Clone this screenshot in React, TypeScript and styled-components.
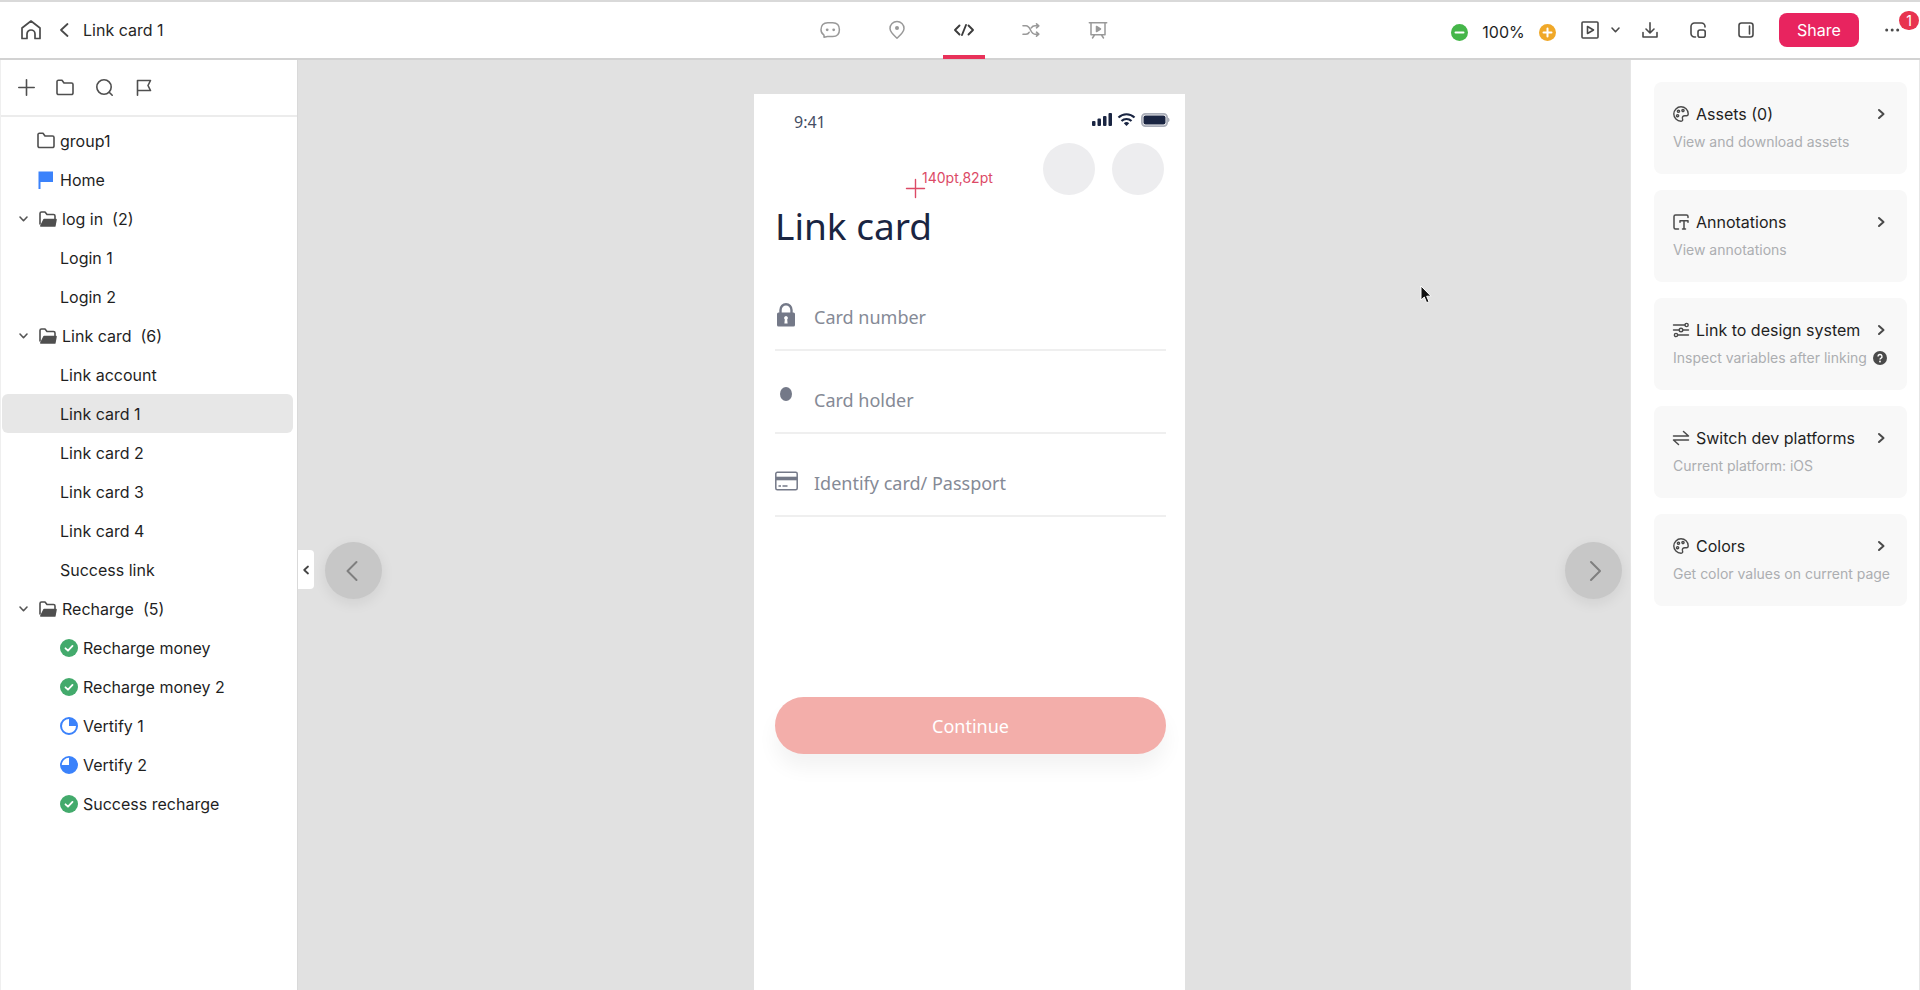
import React from "react";
import styled, { createGlobalStyle } from "styled-components";

const GlobalStyle = createGlobalStyle`
  *, *::before, *::after { box-sizing: border-box; }
  body {
    margin: 0;
    font-family: Inter, "Liberation Sans", sans-serif;
    font-size: 16px;
    line-height: 24px;
    color: #1f1f1f;
    background: #fff;
  }
  button { font: inherit; color: inherit; background: none; border: 0; padding: 0; cursor: pointer; }
  ul { list-style: none; margin: 0; padding: 0; }
  h1, h2, p { margin: 0; font-weight: 400; }
  svg { display: block; flex: none; overflow: visible; }
`;

const Page = styled.div`
  display: flex;
  flex-direction: column;
  height: 100vh;
  border-top: 2px solid #d9d9d9;
  overflow: hidden;
`;

/* ---------- header ---------- */

const Header = styled.header`
  flex: none;
  display: grid;
  grid-template-columns: 1fr auto 1fr;
  align-items: center;
  height: 58px;
  padding: 0 12px 0 20px;
  border-bottom: 2px solid #d2d2d2;
  background: #fff;
`;

const Breadcrumb = styled.div`
  display: flex;
  align-items: center;
  color: #4a4a4a;
`;

const HomeLink = styled.a`
  display: flex;
  color: inherit;
`;

const BackButton = styled.button`
  display: flex;
  margin: 0 13px 0 18px;
`;

const PageName = styled.h1`
  font-size: 16px;
  color: #262626;
`;

const ModeTabs = styled.nav`
  display: flex;
  align-self: stretch;
  gap: 25px;
`;

const ModeTab = styled.button<{ $active?: boolean }>`
  position: relative;
  display: flex;
  align-items: center;
  justify-content: center;
  width: 42px;
  color: ${(p) => (p.$active ? "#3c3c3c" : "#999")};

  &::after {
    content: "";
    position: absolute;
    left: 0;
    right: 0;
    bottom: -1px;
    height: 4px;
    background: ${(p) => (p.$active ? "#e8325a" : "transparent")};
  }
`;

const Actions = styled.div`
  display: flex;
  align-items: center;
  justify-content: flex-end;
  color: #4a4a4a;
`;

const Zoom = styled.div`
  display: flex;
  align-items: center;
  gap: 14px;
  margin: 4px 25px 0 0;
`;

const ZoomButton = styled.button<{ $color: string }>`
  display: flex;
  align-items: center;
  justify-content: center;
  width: 17px;
  height: 17px;
  border-radius: 50%;
  color: #fff;
  background: ${(p) => p.$color};
`;

const ZoomValue = styled.span`
  width: 43px;
  text-align: center;
  color: #1f1f1f;
`;

const IconButton = styled.button<{ $gap?: number }>`
  display: flex;
  align-items: center;
  margin-right: ${(p) => p.$gap ?? 0}px;
`;

const ShareButton = styled.button`
  width: 80px;
  height: 34px;
  margin-right: 26px;
  border-radius: 8px;
  color: #fff;
  background: #e8245f;
`;

const MoreButton = styled.button`
  position: relative;
  display: flex;
  align-items: center;
  width: 23px;
  height: 24px;
`;

const Badge = styled.span`
  position: absolute;
  top: -7px;
  right: -11px;
  width: 20px;
  height: 19px;
  border-radius: 10px;
  font-size: 14px;
  line-height: 19px;
  text-align: center;
  color: #fff;
  background: #e8334f;
`;

/* ---------- sidebar ---------- */

const Body = styled.div`
  display: flex;
  flex: 1;
  min-height: 0;
`;

const Sidebar = styled.aside`
  flex: none;
  width: 298px;
  border-left: 1px solid #efefef;
  border-right: 1px solid #d9d9d9;
  background: #fff;
  overflow: hidden;
`;

const SidebarTools = styled.div`
  display: flex;
  align-items: center;
  gap: 15px;
  height: 57px;
  padding: 0 13px;
  border-bottom: 2px solid #ececec;
  color: #4f4f4f;
`;

const ToolButton = styled.button`
  display: flex;
  align-items: center;
  justify-content: center;
  width: 24px;
  height: 24px;
`;

const Tree = styled.ul`
  padding: 4px 4px 0 1px;
`;

const Row = styled.button<{ $indent: number; $selected?: boolean }>`
  display: flex;
  align-items: center;
  gap: 5px;
  width: 100%;
  height: 39px;
  padding-left: ${(p) => p.$indent}px;
  border-radius: 6px;
  text-align: left;
  background: ${(p) => (p.$selected ? "#e7e7e7" : "transparent")};
`;

const RowIcon = styled.span`
  display: flex;
  justify-content: center;
  width: 18px;
  color: #4f4f4f;
`;

const Chevron = styled.span`
  display: flex;
  width: 15px;
  color: #555;
`;

const Count = styled.span`
  margin-left: 4px;
`;

/* ---------- canvas ---------- */

const Canvas = styled.main`
  position: relative;
  flex: 1;
  display: flex;
  align-items: stretch;
  min-width: 0;
  padding-left: 11px;
  background: #e1e1e1;
`;

const CollapseButton = styled.button`
  position: absolute;
  left: 0;
  top: calc(50% + 25px);
  display: flex;
  align-items: center;
  justify-content: center;
  width: 16px;
  height: 39px;
  border-radius: 0 4px 4px 0;
  color: #444;
  background: #fff;
`;

const Flank = styled.div<{ $end?: boolean }>`
  flex: 1;
  display: flex;
  align-items: center;
  justify-content: ${(p) => (p.$end ? "flex-end" : "flex-start")};
  padding: 90px 8px 0 16px;
`;

const NavButton = styled.button`
  display: flex;
  align-items: center;
  justify-content: center;
  width: 57px;
  height: 57px;
  border-radius: 50%;
  color: #7f7f7f;
  background: #c7c7c7;
  box-shadow: 0 4px 14px rgba(0, 0, 0, 0.08);
`;

const Cursor = styled.div`
  position: absolute;
  right: 198px;
  top: 225px;
`;

const Phone = styled.section`
  position: relative;
  flex: none;
  width: 431px;
  margin-top: 34px;
  padding: 0 19px 0 21px;
  font-family: "Noto Sans", "Open Sans", sans-serif;
  color: #1a2542;
  background: #fff;
`;

const StatusBar = styled.div`
  display: flex;
  align-items: center;
  justify-content: space-between;
  height: 49px;
  padding: 6px 0 0 19px;
  margin-right: -4px;
  font-size: 16px;
  color: #454d64;
`;

const StatusIcons = styled.div`
  display: flex;
  align-items: center;
  gap: 6px;
  margin-bottom: 4px;
  color: #1a2542;
`;

const AvatarRow = styled.div`
  display: flex;
  justify-content: flex-end;
  gap: 17px;
  padding-right: 2px;
`;

const Avatar = styled.span`
  width: 52px;
  height: 52px;
  border-radius: 50%;
  background: #ededef;
`;

const ScreenTitle = styled.h2`
  margin-top: 5px;
  font-size: 37px;
  line-height: 52px;
`;

const Fields = styled.div`
  margin-top: 16px;
`;

const Field = styled.label`
  display: flex;
  align-items: flex-end;
  height: 83px;
  padding-bottom: 19px;
  border-bottom: 2px solid #efefef;
  color: #747988;
`;

const FieldIcon = styled.span`
  display: flex;
  align-items: center;
  justify-content: center;
  width: 22px;
  height: 31px;
  margin-right: 17px;
`;

const FieldInput = styled.input`
  flex: 1;
  min-width: 0;
  height: 26px;
  padding: 0;
  border: 0;
  outline: 0;
  font: 18px/26px "Noto Sans", "Open Sans", sans-serif;
  color: #747988;
  background: transparent;

  &::placeholder { color: #858a96; opacity: 1; }
`;

const ContinueButton = styled.button`
  display: block;
  width: 100%;
  height: 57px;
  margin-top: 180px;
  border-radius: 29px;
  font-size: 18px;
  color: #fff;
  background: #f3aeaa;
  box-shadow: 0 14px 20px rgba(0, 0, 0, 0.05);
`;

const Measure = styled.div`
  position: absolute;
  left: 152px;
  top: 74px;
  display: flex;
  align-items: flex-end;
  color: #dc4a66;
`;

const Coordinates = styled.span`
  margin: 0 0 10px -3px;
  font: 14px/20px Inter, sans-serif;
`;

/* ---------- inspector ---------- */

const Inspector = styled.aside`
  flex: none;
  width: 290px;
  padding: 22px 12px 0 23px;
  border-left: 1px solid #e6e6e6;
  border-right: 1px solid #e6e6e6;
  background: #fff;
`;

const CardList = styled.ul`
  display: flex;
  flex-direction: column;
  gap: 16px;
`;

const Card = styled.button`
  display: block;
  width: 100%;
  height: 92px;
  padding: 4px 22px 6px 19px;
  border-radius: 8px;
  text-align: left;
  background: #f8f8f8;
`;

const CardHead = styled.span`
  display: flex;
  align-items: center;
  gap: 7px;
  color: #4a4a4a;
`;

const CardTitle = styled.span`
  flex: 1;
  color: #1f1f1f;
  white-space: nowrap;
`;

const CardHint = styled.span`
  display: flex;
  align-items: center;
  gap: 6px;
  margin-top: 6px;
  font-size: 14px;
  line-height: 20px;
  color: #acaeb1;
  white-space: nowrap;
`;

/* ---------- icons ---------- */

type IconProps = { w?: number; h?: number; vb?: string; sw?: number; children: React.ReactNode };

const Icon = ({ w = 18, h = 18, vb, sw = 1.6, children }: IconProps) => (
  <svg
    width={w}
    height={h}
    viewBox={vb ?? `0 0 ${w} ${h}`}
    fill="none"
    stroke="currentColor"
    strokeWidth={sw}
    strokeLinejoin="round"
    strokeLinecap="round"
    aria-hidden="true"
  >
    {children}
  </svg>
);

const HomeIcon = () => (
  <Icon w={21} h={20} sw={1.7}>
    <path d="M2 8 11 1l9 7v10.500h-5V14a4 4 0 0 0-8 0v4.500H2Z" />
  </Icon>
);
const FolderIcon = () => (
  <Icon h={17}>
    <path d="M1 3a1.500 1.500 0 0 1 1.500-1.800H6L8 4h7.500A1.500 1.500 0 0 1 17 5.500v8.500a1.500 1.500 0 0 1-1.500 1.500h-13A1.500 1.500 0 0 1 1 14Z" />
  </Icon>
);
const OpenFolderIcon = () => (
  <Icon h={16}>
    <path d="M1 13V2.500A1.500 1.500 0 0 1 2.500 1H6l2 2.500h6.500A1.500 1.500 0 0 1 16 5v4" />
    <path d="M5 8.500h12l-1.200 6.500H1.800Z" fill="currentColor" />
  </Icon>
);
const HomeFlagIcon = () => (
  <Icon sw={0}>
    <path d="M1.500.5h14.500v10.500H3.500V18H1.500Z" fill="#3b82fb" />
  </Icon>
);
const ChevronDown = () => (
  <Icon w={9} h={6}>
    <path d="m1 1 3.500 3.700L8 1" />
  </Icon>
);
const DoneIcon = () => (
  <Icon sw={1.8}>
    <circle cx="9" cy="9" r="9" fill="#43aa6c" stroke="none" />
    <path d="m5.500 9.300 2.500 2.400 4.500-4.800" stroke="#fff" />
  </Icon>
);
const ProgressIcon = ({ most }: { most?: boolean }) => (
  <Icon sw={2}>
    <circle cx="9" cy="9" r="8" stroke="#3b82fb" fill={most ? "#3b82fb" : "#fff"} />
    {most ? (
      <path d="M9 9V1.800A7.200 7.200 0 0 0 1.800 9Z" fill="#fff" stroke="none" />
    ) : (
      <path d="M9 9V1.200A7.800 7.800 0 0 1 16.800 9Z" fill="#3b82fb" stroke="none" />
    )}
  </Icon>
);
const PaletteIcon = () => (
  <Icon w={16} h={16} sw={1.4}>
    <path d="M8 .8a7.200 7.200 0 0 0 0 14.400c1.700 0 1.900-1.200 1.500-2.400-.5-1.900.5-3.100 2.300-3.100h1.700c1.200 0 1.700-.7 1.700-1.900C15.200 3.800 11.900.8 8 .8Z" />
    <circle cx="5.500" cy="5.300" r="1.100" />
    <circle cx="10" cy="4.600" r="1.100" />
    <circle cx="4.600" cy="9.700" r="1.100" />
  </Icon>
);
const AnnotationIcon = () => (
  <Icon w={16} h={16} sw={1.5}>
    <path d="M15 3.500V2.500A1.500 1.500 0 0 0 13.500 1h-11A1.500 1.500 0 0 0 1 2.500v11A1.500 1.500 0 0 0 2.500 15H5.500" />
    <path d="M7 8.300V6.800h8v1.500M11 6.800V15M9.500 15h3" />
  </Icon>
);
const SlidersIcon = () => (
  <Icon w={16} h={16} sw={1.4}>
    <path d="M.5 3H12M.5 8H6M10 8h5.500M5 13h10.500" />
    <circle cx="13.600" cy="3" r="1.600" />
    <circle cx="8" cy="8" r="1.800" />
    <circle cx="3" cy="13" r="1.600" />
  </Icon>
);
const SwitchIcon = () => (
  <Icon w={16} h={16} sw={1.5}>
    <path d="M.5 6h15L10.500 1.500M15.500 10H.5l5 4.500" />
  </Icon>
);

/* ---------- data ---------- */

type Node = { label: string; kind: "group" | "home" | "folder" | "page" | "done" | "quarter" | "most"; count?: number; selected?: boolean };

const nodes: Node[] = [
  { label: "group1", kind: "group" },
  { label: "Home", kind: "home" },
  { label: "log in", kind: "folder", count: 2 },
  { label: "Login 1", kind: "page" },
  { label: "Login 2", kind: "page" },
  { label: "Link card", kind: "folder", count: 6 },
  { label: "Link account", kind: "page" },
  { label: "Link card 1", kind: "page", selected: true },
  { label: "Link card 2", kind: "page" },
  { label: "Link card 3", kind: "page" },
  { label: "Link card 4", kind: "page" },
  { label: "Success link", kind: "page" },
  { label: "Recharge", kind: "folder", count: 5 },
  { label: "Recharge money", kind: "done" },
  { label: "Recharge money 2", kind: "done" },
  { label: "Vertify 1", kind: "quarter" },
  { label: "Vertify 2", kind: "most" },
  { label: "Success recharge", kind: "done" },
];

const indents = { group: 35, home: 35, folder: 17, page: 58, done: 58, quarter: 58, most: 58 };

const nodeIcons = {
  group: <FolderIcon />,
  home: <HomeFlagIcon />,
  folder: <OpenFolderIcon />,
  page: null,
  done: <DoneIcon />,
  quarter: <ProgressIcon />,
  most: <ProgressIcon most />,
};

const cards = [
  { title: "Assets (0)", hint: "View and download assets", icon: <PaletteIcon /> },
  { title: "Annotations", hint: "View annotations", icon: <AnnotationIcon /> },
  { title: "Link to design system", hint: "Inspect variables after linking", icon: <SlidersIcon />, help: true },
  { title: "Switch dev platforms", hint: "Current platform: iOS", icon: <SwitchIcon /> },
  { title: "Colors", hint: "Get color values on current page", icon: <PaletteIcon /> },
];

const HelpMark = () => (
  <svg width="14" height="14" viewBox="0 0 14 14" aria-hidden="true">
    <circle cx="7" cy="7" r="7" fill="#4a4a4a" />
    <path d="M5 5.500a2 2 0 1 1 2.800 1.800c-.6.300-.8.500-.8 1.200" fill="none" stroke="#fff" strokeWidth="1.400" />
    <circle cx="7" cy="10.500" r=".9" fill="#fff" />
  </svg>
);

const fields = [
  {
    label: "Card number",
    icon: (
      <svg width="18" height="24" viewBox="0 0 18 24" aria-hidden="true">
        <path d="M3.500 10V7a5.500 5.800 0 0 1 11 0v3" fill="none" stroke="currentColor" strokeWidth="2.400" />
        <rect y="9.500" width="18" height="14" rx="1.500" fill="currentColor" />
        <path d="M9 13a2 2 0 0 1 1.200 3.500l.4 4H7.400l.4-4A2 2 0 0 1 9 13Z" fill="#fff" />
      </svg>
    ),
  },
  {
    label: "Card holder",
    icon: (
      <svg width="12" height="24" viewBox="0 0 12 24" aria-hidden="true">
        <ellipse cx="6" cy="8" rx="6" ry="7" fill="currentColor" />
      </svg>
    ),
  },
  {
    label: "Identify card/ Passport",
    icon: (
      <svg width="23" height="24" viewBox="0 0 23 24" fill="none" stroke="currentColor" aria-hidden="true">
        <rect x=".8" y="3.300" width="21.400" height="17.500" rx="1.500" strokeWidth="1.500" />
        <path d="M1 9.500h21" strokeWidth="3.600" />
        <path d="M3.500 17H6M7.500 17h5" strokeWidth="1.300" />
      </svg>
    ),
  },
];

/* ---------- page ---------- */

export default function App() {
  return (
    <Page>
      <GlobalStyle />
      <Header>
        <Breadcrumb>
          <HomeLink href="#home" aria-label="Home"><HomeIcon /></HomeLink>
          <BackButton aria-label="Back">
            <Icon w={11} h={14} sw={1.8}><path d="M8.500 1 2 7l6.500 6" /></Icon>
          </BackButton>
          <PageName>Link card 1</PageName>
        </Breadcrumb>

        <ModeTabs aria-label="Modes">
          <ModeTab aria-label="Comment">
            <Icon w={20} h={18} sw={1.5}>
              <path d="M4 16.200V14.200C2 12.800 1 11 1 8.700c0-4.400 2.500-7 6.700-7h5c4.200 0 6.700 2.600 6.700 7 0 4.200-2.500 6.800-6.700 6.800H7.500Z" />
              <circle cx="7.200" cy="8.800" r="1.400" fill="currentColor" stroke="none" />
              <circle cx="13.700" cy="8.800" r="1.400" fill="currentColor" stroke="none" />
            </Icon>
          </ModeTab>
          <ModeTab aria-label="Location">
            <Icon w={16} h={18} sw={1.5}>
              <path d="M8 17.200C4.500 14 1 11 1 7.500a7 7 0 0 1 14 0C15 11 11.500 14 8 17.200Z" />
              <circle cx="8" cy="7" r="2" fill="currentColor" stroke="none" />
            </Icon>
          </ModeTab>
          <ModeTab $active aria-label="Develop">
            <Icon w={20} h={12} sw={1.9}>
              <path d="M5.500 1.500 1 6l4.500 4.500M14.500 1.500 19 6l-4.500 4.500M12 1 8 11" />
            </Icon>
          </ModeTab>
          <ModeTab aria-label="Flow">
            <Icon w={18} h={14} sw={1.6}>
              <path d="M1 2.800h3c5 0 4 8.400 9 8.400h3.500M1 11.200h3c1.500 0 2.500-.7 3.100-1.900M9.300 4.900c.8-1.300 1.900-2.100 3.700-2.100h3.500M14.500.800l2.300 2-2.300 2M14.500 9.200l2.300 2-2.300 2" />
            </Icon>
          </ModeTab>
          <ModeTab aria-label="Present">
            <Icon w={19} h={18} sw={1.5}>
              <path d="M.3 1.700h17.400M2 1.700v12h14v-12M5.500 14l-2 3M12.500 14l2 3" />
              <path d="M7.500 5.500v5l4-2.500Z" fill="currentColor" />
            </Icon>
          </ModeTab>
        </ModeTabs>

        <Actions>
          <Zoom>
            <ZoomButton $color="#45b649" aria-label="Zoom out">
              <Icon w={9} h={9} sw={2}><path d="M.5 4.500h8" /></Icon>
            </ZoomButton>
            <ZoomValue>100%</ZoomValue>
            <ZoomButton $color="#f0a828" aria-label="Zoom in">
              <Icon w={9} h={9} sw={2}><path d="M.5 4.500h8M4.500.5v8" /></Icon>
            </ZoomButton>
          </Zoom>
          <IconButton $gap={12} aria-label="Play">
            <Icon><rect x="1" y="1" width="16" height="16" rx="1" /><path d="M6.500 5.500v7l6-3.500Z" /></Icon>
          </IconButton>
          <IconButton $gap={22} aria-label="Play options"><ChevronDown /></IconButton>
          <IconButton $gap={32} aria-label="Download">
            <Icon w={16} h={16}><path d="M8 .8v10M4 7l4 4 4-4M1 10.500v4.500h14v-4.500" /></Icon>
          </IconButton>
          <IconButton $gap={32} aria-label="Duplicate">
            <Icon w={16} h={16}>
              <path d="M15 5V4.500A3.500 3.500 0 0 0 11.500 1h-7A3.500 3.500 0 0 0 1 4.500v7A3.500 3.500 0 0 0 4.500 15H5.500" />
              <rect x="8" y="8" width="7.200" height="7.200" rx="2" />
            </Icon>
          </IconButton>
          <IconButton $gap={25} aria-label="Toggle panel">
            <Icon w={16} h={16}><rect x="1" y="1" width="14" height="14" rx="2.500" /><path d="M11.500 4v8" /></Icon>
          </IconButton>
          <ShareButton>Share</ShareButton>
          <MoreButton aria-label="More">
            <Icon w={15} h={4} sw={0}>
              <circle cx="1.700" cy="2" r="1.500" fill="currentColor" />
              <circle cx="7.200" cy="2" r="1.500" fill="currentColor" />
              <circle cx="12.700" cy="2" r="1.500" fill="currentColor" />
            </Icon>
            <Badge>1</Badge>
          </MoreButton>
        </Actions>
      </Header>

      <Body>
        <Sidebar>
          <SidebarTools>
            <ToolButton aria-label="Add page"><Icon w={17} h={17}><path d="M8.500.8v15.400M.8 8.500h15.400" /></Icon></ToolButton>
            <ToolButton aria-label="Add folder"><FolderIcon /></ToolButton>
            <ToolButton aria-label="Search">
              <Icon w={17} h={17}><circle cx="8" cy="8" r="7.200" /><path d="m13.200 13.200 3 3" /></Icon>
            </ToolButton>
            <ToolButton aria-label="Flag">
              <Icon w={15} h={17}><path d="M1.500 16.200V1.500h13L12 6.500l2.500 5h-13" /></Icon>
            </ToolButton>
          </SidebarTools>
          <Tree>
            {nodes.map((n) => (
              <li key={n.label}>
                <Row $indent={indents[n.kind]} $selected={n.selected}>
                  {n.kind === "folder" && <Chevron><ChevronDown /></Chevron>}
                  {nodeIcons[n.kind] && <RowIcon>{nodeIcons[n.kind]}</RowIcon>}
                  {n.label}
                  {n.count && <Count>({n.count})</Count>}
                </Row>
              </li>
            ))}
          </Tree>
        </Sidebar>

        <Canvas>
          <CollapseButton aria-label="Collapse sidebar">
            <Icon w={6} h={8} sw={1.8}><path d="M5 .5 1.200 4 5 7.500" /></Icon>
          </CollapseButton>
          <Flank>
            <NavButton aria-label="Previous screen">
              <Icon w={12} h={20} sw={2}><path d="m8.500 2-9 9 9 9" /></Icon>
            </NavButton>
          </Flank>

          <Phone>
            <StatusBar>
              9:41
              <StatusIcons>
                <svg width="20" height="13" viewBox="0 0 20 13" fill="currentColor" aria-hidden="true">
                  <rect y="8" width="3.500" height="5" rx="1" />
                  <rect x="5.500" y="5.500" width="3.500" height="7.500" rx="1" />
                  <rect x="11" y="3" width="3.500" height="10" rx="1" />
                  <rect x="16.500" width="3.500" height="13" rx="1" />
                </svg>
                <svg width="17" height="13" viewBox="0 0 17 13" aria-hidden="true">
                  <path d="M.5 4.500a11.500 11.500 0 0 1 16 0M3.500 8a7.200 7.200 0 0 1 10 0" fill="none" stroke="currentColor" strokeWidth="2.200" />
                  <path d="M5.800 10.200a4 4 0 0 1 5.400 0L8.500 13Z" fill="currentColor" />
                </svg>
                <svg width="29" height="14" viewBox="0 0 29 14" aria-hidden="true">
                  <rect x=".9" y=".9" width="25.200" height="12.200" rx="3.500" fill="none" stroke="#a9adb8" strokeWidth="1.800" />
                  <rect x="2.500" y="2.500" width="22" height="9" rx="2" fill="currentColor" />
                  <path d="M27 4.800c2 .6 2 3.800 0 4.400Z" fill="#a9adb8" />
                </svg>
              </StatusIcons>
            </StatusBar>
            <AvatarRow>
              <Avatar />
              <Avatar />
            </AvatarRow>
            <Measure>
              <Icon w={19} h={19} sw={1.4}><path d="M9.500.5v18M.5 9.500h18" /></Icon>
              <Coordinates>140pt,82pt</Coordinates>
            </Measure>
            <ScreenTitle>Link card</ScreenTitle>
            <Fields>
              {fields.map((f) => (
                <Field key={f.label}>
                  <FieldIcon>{f.icon}</FieldIcon>
                  <FieldInput placeholder={f.label} aria-label={f.label} />
                </Field>
              ))}
            </Fields>
            <ContinueButton>Continue</ContinueButton>
          </Phone>

          <Flank $end>
            <NavButton aria-label="Next screen">
              <Icon w={12} h={20} sw={2}><path d="m3 2 9 9-9 9" /></Icon>
            </NavButton>
          </Flank>
          <Cursor>
            <svg width="12" height="19" viewBox="0 0 12 19" aria-hidden="true">
              <path d="M1 1v14l3.300-3 2.300 5.700 2.400-1-2.300-5.500H11Z" fill="#111" stroke="#fff" strokeWidth="1" />
            </svg>
          </Cursor>
        </Canvas>

        <Inspector>
          <CardList>
            {cards.map((c) => (
              <li key={c.title}>
                <Card>
                  <CardHead>
                    {c.icon}
                    <CardTitle>{c.title}</CardTitle>
                    <Icon w={7} h={10} sw={2}><path d="m1 1 4.500 4L1 9" /></Icon>
                  </CardHead>
                  <CardHint>
                    {c.hint}
                    {c.help && <HelpMark />}
                  </CardHint>
                </Card>
              </li>
            ))}
          </CardList>
        </Inspector>
      </Body>
    </Page>
  );
}
